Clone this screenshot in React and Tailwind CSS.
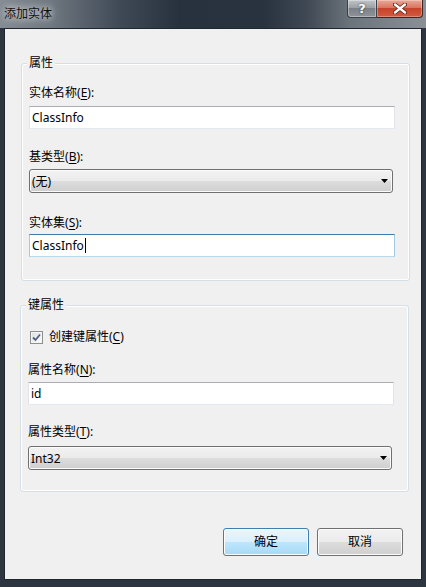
import React from "react";

const fontStack = "font-['Noto_Sans','Noto_Sans_CJK_SC',sans-serif]";

function Label({ text, hotkey, className = "" }) {
  return (
    <div className={`h-[16px] leading-[16px] text-[12px] text-black ${className}`}>
      {text}(<span className="underline underline-offset-2">{hotkey}</span>):
    </div>
  );
}

function TextBox({ value, focused, className = "" }) {
  const border = focused
    ? "border-[#a4c9e3] border-t-[#3d7bad] border-b-[#b7d9ed]"
    : "border-[#e2e3ea] border-t-[#abadb3] border-b-[#e3e9ef]";
  return (
    <div className={`flex h-[23px] w-[366px] items-center border bg-white pl-[2px] text-[12px] leading-[16px] text-black ${border} ${className}`}>
      <span>{value}</span>
      {focused && <span className="ml-[1px] inline-block h-[15px] w-px bg-black" />}
    </div>
  );
}

function ComboBox({ value, className = "" }) {
  return (
    <div
      className={`flex h-[24px] w-[364px] items-center justify-between rounded-[3px] border border-[#707070] bg-[linear-gradient(#f2f2f2_0%,#ebebeb_50%,#dddddd_50%,#cfcfcf_100%)] pl-[2px] pr-[4px] text-[12px] leading-[16px] text-black shadow-[inset_0_0_0_1px_#fbfbfb] ${className}`}
    >
      <span className="pt-[2px]">{value}</span>
      <svg width="7" height="4" viewBox="0 0 7 4">
        <path d="M0 0 H7 L3.5 4 Z" fill="#000" />
      </svg>
    </div>
  );
}

function GroupBox({ title, className = "", children }) {
  return (
    <div className={`relative w-[389px] rounded-[3px] border border-[#d5dfe5] pl-[7px] shadow-[inset_0_0_0_1px_#fff] ${className}`}>
      <span className="absolute left-[5px] top-[-9px] bg-[#f0f0f0] px-[2px] text-[12px] leading-[16px] text-black">
        {title}
      </span>
      {children}
    </div>
  );
}

function CheckBox() {
  return (
    <div className="flex h-[13px] w-[13px] items-center justify-center border border-[#8e8f8f] bg-[linear-gradient(135deg,#dcdcdc,#ffffff)] shadow-[inset_0_0_0_1px_#f4f4f4]">
      <svg width="9" height="9" viewBox="0 0 9 9">
        <path d="M1 4.5 L3.5 7 L8 1.5" fill="none" stroke="#4f6088" strokeWidth="1.8" />
      </svg>
    </div>
  );
}

function DialogButton({ label, primary }) {
  const look = primary
    ? "border-[#3c7fb1] bg-[linear-gradient(#eaf6fd_0%,#d9f0fc_50%,#bee6fd_50%,#a7d9f5_100%)]"
    : "border-[#707070] bg-[linear-gradient(#f2f2f2_0%,#ebebeb_50%,#dddddd_50%,#cfcfcf_100%)]";
  return (
    <button
      className={`flex h-[28px] w-[86px] items-center justify-center rounded-[3px] border text-[12px] leading-[16px] text-black shadow-[inset_0_0_0_1px_#fcfcfc] ${look}`}
    >
      {label}
    </button>
  );
}

export default function App() {
  return (
    <div className={`flex h-[587px] w-[426px] flex-col bg-[#2c3540] ${fontStack}`}>
      {/* caption bar */}
      <div className="flex h-[28px] shrink-0 items-start bg-[linear-gradient(90deg,#858c93_0%,#6f7780_12%,#404a56_28%,#28323f_42%,#29333f_62%,#3f4853_72%,#6b737b_82%,#8a9096_100%)]">
        <div className="pl-[4px] pt-[6px] text-[12px] leading-[16px] text-[#111] [text-shadow:0_0_6px_#dfe3e6,0_0_10px_#c7ccd1]">
          添加实体
        </div>
        <div className="ml-auto mr-[3px] flex">
          <div className="flex h-[18px] w-[30px] items-center justify-center rounded-bl-[4px] border border-t-0 border-[#3a4047] bg-[linear-gradient(#c1c5c9_0%,#9ca1a6_45%,#7b8187_50%,#8f949a_100%)] shadow-[inset_0_0_0_1px_rgba(255,255,255,0.35)]">
            <span className="font-['DejaVu_Sans',sans-serif] text-[13px] font-bold leading-none text-white [text-shadow:0_0_2px_#222]">?</span>
          </div>
          <div className="flex h-[18px] w-[46px] items-center justify-center rounded-br-[4px] border border-l-0 border-t-0 border-[#3a2a27] bg-[linear-gradient(#e9a898_0%,#d97660_45%,#c5432b_50%,#d45a3e_100%)] shadow-[inset_0_0_0_1px_rgba(255,255,255,0.3)]">
            <svg width="14" height="11" viewBox="0 0 14 11">
              <path d="M2 1.5 L12 9.5 M12 1.5 L2 9.5" stroke="#5a1e14" strokeWidth="4" strokeLinecap="round" />
              <path d="M2 1.5 L12 9.5 M12 1.5 L2 9.5" stroke="#fff" strokeWidth="2.4" strokeLinecap="round" />
            </svg>
          </div>
        </div>
      </div>

      {/* client area */}
      <div className="ml-[4px] mr-[4px] flex h-[552px] shrink-0 flex-col border border-[#1f262e] bg-[#f0f0f0]">
        <GroupBox title="属性" className="ml-[16px] mt-[34px] pb-[23px]">
          <Label text="实体名称" hotkey="E" className="mt-[21px]" />
          <TextBox value="ClassInfo" className="mt-[5px]" />
          <Label text="基类型" hotkey="B" className="mt-[20px]" />
          <ComboBox value="(无)" className="mt-[4px]" />
          <Label text="实体集" hotkey="S" className="mt-[22px]" />
          <TextBox value="ClassInfo" focused className="mt-[3px]" />
        </GroupBox>

        <GroupBox title="键属性" className="ml-[15px] mt-[24px] pb-[21px]">
          <div className="mt-[23px] flex h-[16px] items-center pl-[2px]">
            <CheckBox />
            <span className="ml-[6px] text-[12px] leading-[16px] text-black">
              创建键属性(<span className="underline underline-offset-2">C</span>)
            </span>
          </div>
          <Label text="属性名称" hotkey="N" className="mt-[17px]" />
          <TextBox value="id" className="mt-[4px]" />
          <Label text="属性类型" hotkey="T" className="mt-[19px]" />
          <ComboBox value="Int32" className="mt-[6px]" />
        </GroupBox>

        <div className="mt-[36px] flex justify-end gap-[8px] pr-[18px]">
          <DialogButton label="确定" primary />
          <DialogButton label="取消" />
        </div>
      </div>
    </div>
  );
}
